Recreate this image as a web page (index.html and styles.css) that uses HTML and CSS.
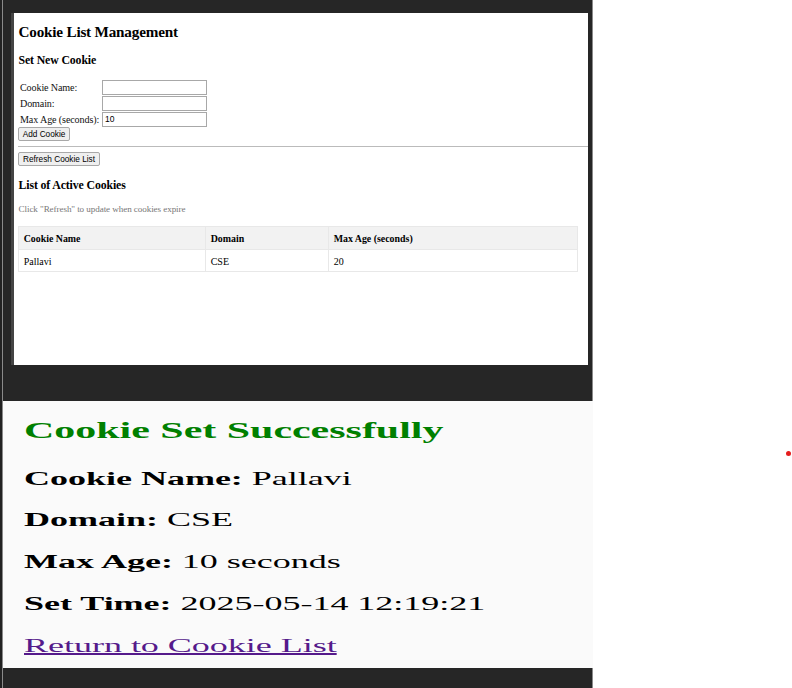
FILE: index.html
```html
<!DOCTYPE html>
<html lang="en">
<head>
<meta charset="utf-8">
<title>Cookie List Management</title>
<link rel="stylesheet" href="styles.css">
</head>
<body>
<main class="stage">
  <section class="card">
    <h2>Cookie List Management</h2>
    <h3 class="set-title">Set New Cookie</h3>
    <form class="form">
      <label for="name">Cookie Name:</label><input id="name" type="text">
      <label for="domain">Domain:</label><input id="domain" type="text">
      <label for="age">Max Age (seconds):</label><input id="age" type="text" value="10">
    </form>
    <button class="add" type="button">Add Cookie</button>
    <hr>
    <button class="refresh" type="button">Refresh Cookie List</button>
    <h3 class="list-title">List of Active Cookies</h3>
    <p class="hint">Click "Refresh" to update when cookies expire</p>
    <table>
      <colgroup><col class="c1"><col class="c2"><col class="c3"></colgroup>
      <tr><th>Cookie Name</th><th>Domain</th><th>Max Age (seconds)</th></tr>
      <tr><td>Pallavi</td><td>CSE</td><td>20</td></tr>
    </table>
  </section>
  <section class="result">
    <div class="wide">
      <h3>Cookie Set Successfully</h3>
      <p><b>Cookie Name:</b> Pallavi</p>
      <p><b>Domain:</b> CSE</p>
      <p><b>Max Age:</b> 10 seconds</p>
      <p><b>Set Time:</b> 2025-05-14 12:19:21</p>
      <p><a href="#">Return to Cookie List</a></p>
    </div>
  </section>
</main>
<span class="dot"></span>
</body>
</html>
```
FILE: styles.css
```css
* { box-sizing: border-box; }
body {
  margin: 0;
  height: 688px;
  display: flex;
  overflow: hidden;
  background: #fff;
  color: #000;
  font-family: "Liberation Serif", "Times New Roman", serif;
}
h2, h3, p { margin: 0; white-space: nowrap; }
.stage {
  width: 593px;
  height: 688px;
  background: linear-gradient(90deg, #222 2px, #8a8a8a 2px, #8a8a8a 3px, #262626 3px, #262626 592px, #8a8a8a 592px);
}
.card {
  width: 577px;
  height: 352px;
  margin: 13px 0 0 11px;
  padding: 10px 0 0 4px;
  border-left: 3px solid #444;
  background: #fff;
  font-size: 10.4px;
}
.card h2 { padding-left: 0.5px; font-size: 15.2px; line-height: 17px; height: 18px; letter-spacing: -0.2px; }
.card h3 { padding-left: 0.5px; font-size: 11.8px; line-height: 15px; height: 14px; letter-spacing: -0.12px; }
.card .set-title { margin: 12px 0 13px; }
.form {
  display: grid;
  grid-template-columns: 81px 105px;
  grid-auto-rows: 14px;
  gap: 2px 1px;
  padding-left: 2px;
  color: #111;
}
.form label { font-size: 10.1px; line-height: 15px; letter-spacing: -0.12px; white-space: nowrap; }
.form input {
  width: 104.5px;
  height: 14.5px;
  margin: 0;
  padding: 0 2px;
  border: 1px solid #a8a8a8;
  font: 8.5px "Liberation Sans", Arial, sans-serif;
}
button {
  display: block;
  height: 14px;
  padding: 0;
  border: 1px solid #a8a8a8;
  border-radius: 2px;
  background: #efefef;
  color: #000;
  font: 8.25px/11px "Liberation Sans", Arial, sans-serif;
  white-space: nowrap;
}
.add { width: 52px; margin-top: 1px; }
hr { margin: 5px 0; border: 0; height: 1px; background: #bbb; }
.refresh { width: 82px; }
.card .list-title { margin-top: 12px; }
.hint { padding-left: 0.5px; margin-top: 10px; font-size: 9.1px; line-height: 14px; letter-spacing: -0.08px; color: #777; }
table {
  width: 560px;
  margin-top: 10px;
  border-collapse: collapse;
  table-layout: fixed;
}
.c1 { width: 187px; }
.c2 { width: 123px; }
th, td {
  height: 22.5px;
  padding: 2px 5px 0 4.7px;
  border: 1px solid #e8e8e8;
  font-size: 10px;
  line-height: 12px;
  text-align: left;
}
td { padding-top: 3px; }
th { background: #f2f2f2; font-size: 9.9px; }
.result {
  width: 590px;
  height: 267px;
  margin: 36px 0 0 3px;
  padding: 16px 0 0 21px;
  background: #fafafa;
}
.wide {
  width: 300px;
  transform: scaleX(1.84);
  transform-origin: 0 0;
  font-size: 19.6px;
}
.wide h3 { margin-bottom: 20.5px; font-size: 22.8px; line-height: 28px; color: #008000; }
.wide p { height: 41.8px; line-height: 26px; letter-spacing: -0.02px; }
.wide a { color: #551a8b; text-decoration-thickness: 1.6px; }
.dot {
  width: 5px;
  height: 5px;
  margin: 451px 0 0 192.5px;
  border-radius: 50%;
  background: #e51c1c;
}
```
